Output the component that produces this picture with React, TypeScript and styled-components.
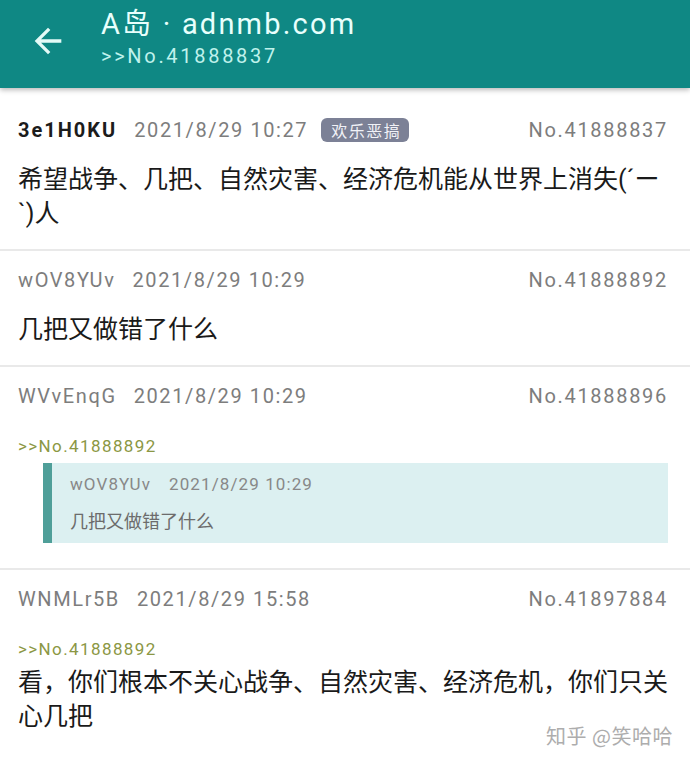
import React from "react";
import styled, { createGlobalStyle } from "styled-components";

const GlobalStyle = createGlobalStyle`
  html, body {
    margin: 0;
    padding: 0;
    background: #ffffff;
  }
  body {
    font-family: Roboto, "Noto Sans CJK SC", sans-serif;
    -webkit-font-smoothing: antialiased;
  }
  * { box-sizing: border-box; }
`;

const Screen = styled.div`
  position: relative;
  width: 690px;
  height: 762px;
  overflow: hidden;
  background: #ffffff;
`;

const AppBar = styled.header`
  display: flex;
  align-items: flex-start;
  height: 88px;
  padding: 7px 0 0 28px;
  background: #0f8884;
  box-shadow: 0 2px 5px rgba(0, 0, 0, 0.28);
  position: relative;
  z-index: 1;
`;

const BackButton = styled.button`
  display: flex;
  align-items: center;
  justify-content: center;
  width: 40px;
  height: 40px;
  margin-top: 14px;
  padding: 0;
  border: 0;
  background: none;
  color: #e4faf7;
  cursor: pointer;
`;

const TitleBlock = styled.div`
  display: flex;
  flex-direction: column;
  margin-left: 33px;
`;

const Title = styled.div`
  font-family: Roboto, "Noto Sans CJK SC", sans-serif;
  font-size: 29px;
  line-height: 34px;
  letter-spacing: 2.2px;
  color: #e8fffc;
  white-space: nowrap;
`;

const Subtitle = styled.div`
  font-family: Roboto, "Noto Sans CJK SC", sans-serif;
  font-size: 20px;
  line-height: 30px;
  letter-spacing: 2.7px;
  color: #bff2ec;
`;

const ThreadList = styled.main`
  display: flex;
  flex-direction: column;
  padding-top: 13px;
`;

const Post = styled.article`
  display: flex;
  flex-direction: column;
  padding: 14px 22px 18px 18px;
  border-bottom: 2px solid #e9e9e9;

  &:last-child {
    border-bottom: 0;
  }
`;

const MetaRow = styled.div`
  display: flex;
  align-items: center;
  height: 30px;
  font-family: Roboto, "Noto Sans CJK SC", sans-serif;
  font-size: 20px;
  letter-spacing: 1.6px;
  color: #7d7d7d;
  white-space: nowrap;
`;

const Cookie = styled.span<{ $po?: boolean }>`
  font-weight: ${(p) => (p.$po ? 700 : 400)};
  color: ${(p) => (p.$po ? "#1c1c1c" : "#7d7d7d")};
  letter-spacing: ${(p) => (p.$po ? "2px" : "1.6px")};
`;

const Time = styled.span`
  margin-left: 17px;
`;

const Tag = styled.span`
  display: inline-flex;
  align-items: center;
  height: 24px;
  margin-left: 13px;
  padding: 0 8px 0 10px;
  border-radius: 6px;
  background: #7c8196;
  color: #f1f2f7;
  font-family: "Noto Sans CJK SC", sans-serif;
  font-size: 16px;
  letter-spacing: 1.5px;
`;

const PostNo = styled.span`
  margin-left: auto;
  letter-spacing: 1.7px;
`;

const Content = styled.div`
  margin-top: 18px;
  font-family: Roboto, "Noto Sans CJK SC", sans-serif;
  font-size: 25px;
  line-height: 34px;
  color: #1a1a1a;
`;

const RefLink = styled.div`
  font-family: Roboto, sans-serif;
  font-size: 17px;
  line-height: 34px;
  letter-spacing: 1.4px;
  color: #8b9744;
`;

const Quote = styled.blockquote`
  display: flex;
  flex-direction: column;
  margin: 0 0 7px 25px;
  padding: 10px 0 10px 18px;
  border-left: 9px solid #4f9f99;
  background: #dcf0f1;
`;

const QuoteMeta = styled.div`
  display: flex;
  height: 22px;
  align-items: center;
  font-family: Roboto, sans-serif;
  font-size: 17px;
  letter-spacing: 1.1px;
  color: #888888;
  gap: 18px;
`;

const QuoteText = styled.div`
  margin-top: 12px;
  font-family: "Noto Sans CJK SC", sans-serif;
  font-size: 18px;
  line-height: 26px;
  color: #6c6c6c;
`;

const Watermark = styled.div`
  position: absolute;
  right: 17px;
  bottom: 13px;
  font-family: "Noto Sans CJK SC", sans-serif;
  font-size: 20px;
  line-height: 26px;
  color: #adadad;
  letter-spacing: 0.5px;
`;

const BackArrow = () => (
  <svg width="40" height="40" viewBox="0 0 24 24" aria-hidden="true">
    <path
      fill="currentColor"
      d="M20 11H7.83l5.59-5.59L12 4l-8 8 8 8 1.41-1.41L7.83 13H20v-2z"
    />
  </svg>
);

type Reply = {
  cookie: string;
  time: string;
  no: string;
  po?: boolean;
  tag?: string;
  quote?: { ref: string; cookie: string; time: string; text: string };
  refs?: string[];
  text?: string;
};

const posts: Reply[] = [
  {
    cookie: "3e1H0KU",
    time: "2021/8/29 10:27",
    no: "No.41888837",
    po: true,
    tag: "欢乐恶搞",
    text: "希望战争、几把、自然灾害、经济危机能从世界上消失(´ー`)人",
  },
  {
    cookie: "wOV8YUv",
    time: "2021/8/29 10:29",
    no: "No.41888892",
    text: "几把又做错了什么",
  },
  {
    cookie: "WVvEnqG",
    time: "2021/8/29 10:29",
    no: "No.41888896",
    quote: {
      ref: ">>No.41888892",
      cookie: "wOV8YUv",
      time: "2021/8/29 10:29",
      text: "几把又做错了什么",
    },
  },
  {
    cookie: "WNMLr5B",
    time: "2021/8/29 15:58",
    no: "No.41897884",
    refs: [">>No.41888892"],
    text: "看，你们根本不关心战争、自然灾害、经济危机，你们只关心几把",
  },
];

export default function App() {
  return (
    <>
      <GlobalStyle />
      <Screen>
        <AppBar>
          <BackButton aria-label="返回">
            <BackArrow />
          </BackButton>
          <TitleBlock>
            <Title>A岛 · adnmb.com</Title>
            <Subtitle>&gt;&gt;No.41888837</Subtitle>
          </TitleBlock>
        </AppBar>

        <ThreadList>
          {posts.map((p) => (
            <Post key={p.no}>
              <MetaRow>
                <Cookie $po={p.po}>{p.cookie}</Cookie>
                <Time>{p.time}</Time>
                {p.tag && <Tag>{p.tag}</Tag>}
                <PostNo>{p.no}</PostNo>
              </MetaRow>
              <Content>
                {p.refs?.map((r) => (
                  <RefLink key={r}>{r}</RefLink>
                ))}
                {p.quote && (
                  <>
                    <RefLink>{p.quote.ref}</RefLink>
                    <Quote>
                      <QuoteMeta>
                        <span>{p.quote.cookie}</span>
                        <span>{p.quote.time}</span>
                      </QuoteMeta>
                      <QuoteText>{p.quote.text}</QuoteText>
                    </Quote>
                  </>
                )}
                {p.text && <div>{p.text}</div>}
              </Content>
            </Post>
          ))}
        </ThreadList>

        <Watermark>知乎 @笑哈哈</Watermark>
      </Screen>
    </>
  );
}
